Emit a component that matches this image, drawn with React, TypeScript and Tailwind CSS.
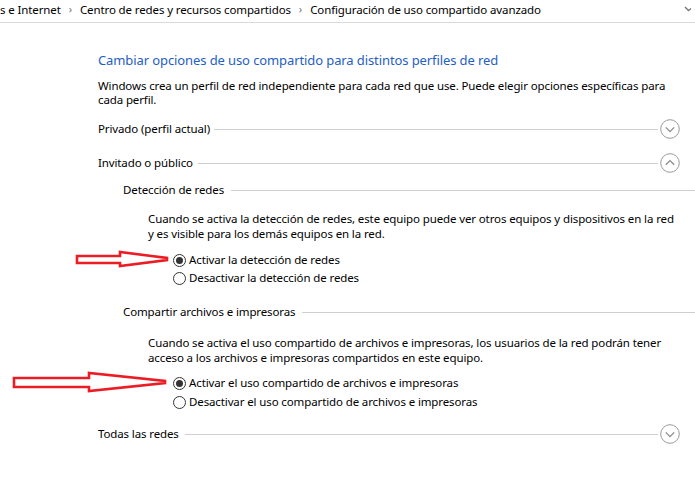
import React from "react";

const font = { fontFamily: '"Segoe UI", "Noto Sans", sans-serif' };

function CircleChevron({ up }: { up?: boolean }) {
  return (
    <svg width="20" height="20" viewBox="0 0 20 20" className="shrink-0 ml-[2px]">
      <circle cx="10" cy="10" r="9.3" fill="none" stroke="#9a9a9a" strokeWidth="1" />
      {up ? (
        <path d="M5.8 11.8 L10 7.6 L14.2 11.8" fill="none" stroke="#8a8a8a" strokeWidth="1.3" />
      ) : (
        <path d="M5.8 8.4 L10 12.6 L14.2 8.4" fill="none" stroke="#8a8a8a" strokeWidth="1.3" />
      )}
    </svg>
  );
}

function Radio({ checked, label }: { checked?: boolean; label: string }) {
  return (
    <div className="flex items-center h-[18px]">
      <span className="w-[13px] h-[13px] rounded-full border border-[#333] flex items-center justify-center bg-white shrink-0">
        {checked && <span className="w-[7px] h-[7px] rounded-full bg-[#333]" />}
      </span>
      <span className="ml-[3px]">{label}</span>
    </div>
  );
}

function Arrow({ points, className }: { points: string; className: string }) {
  return (
    <svg className={"absolute " + className} width="180" height="30" viewBox="0 0 180 30">
      <polygon points={points} fill="none" stroke="#ec1c24" strokeWidth="2.6" strokeLinejoin="miter" />
    </svg>
  );
}

export default function App() {
  return (
    <div
      className="relative w-[695px] h-[492px] bg-white overflow-hidden text-[11.5px] tracking-[-0.12px] text-black"
      style={font}
    >
      <div className="h-[23px] border-b border-[#d9d9d9] flex items-center pb-[3px] relative">
        <span>s e Internet</span>
        <span className="ml-[8px] mr-[8px] text-[#777] text-[11px]">›</span>
        <span>Centro de redes y recursos compartidos</span>
        <span className="ml-[8px] mr-[8px] text-[#777] text-[11px]">›</span>
        <span>Configuración de uso compartido avanzado</span>
        <svg className="absolute right-[3px] top-[6px]" width="8" height="6" viewBox="0 0 8 6">
          <path d="M1 1 L4.5 4.5 L7 2.5" fill="none" stroke="#777" strokeWidth="1.4" />
        </svg>
      </div>

      <div className="pl-[98px] pr-[15px]">
        <div className="mt-[27px] h-[20px] leading-[20px] text-[13px] tracking-[-0.1px] text-[#1f5ec4]">
          Cambiar opciones de uso compartido para distintos perfiles de red
        </div>
        <p className="mt-[9px] leading-[14px]">
          Windows crea un perfil de red independiente para cada red que use. Puede elegir opciones específicas para cada perfil.
        </p>

        <div className="mt-[12px] h-[20px] flex items-center">
          <span>Privado (perfil actual)</span>
          <span className="flex-1 h-px bg-[#cfcfcf] ml-[4px]" />
          <CircleChevron />
        </div>

        <div className="mt-[14px] h-[20px] flex items-center">
          <span>Invitado o público</span>
          <span className="flex-1 h-px bg-[#cfcfcf] ml-[5px]" />
          <CircleChevron up />
        </div>

        <div className="pl-[25px] mr-[-15px]">
          <div className="mt-[9px] h-[16px] flex items-center">
            <span>Detección de redes</span>
            <span className="flex-1 h-px bg-[#cfcfcf] ml-[7px]" />
          </div>
          <div className="pl-[25px] pr-[15px]">
            <p className="mt-[13px] leading-[15px]">
              Cuando se activa la detección de redes, este equipo puede ver otros equipos y dispositivos en la red y es visible para los demás equipos en la red.
            </p>
            <div className="mt-[10px] pl-[25px]">
              <Radio checked label="Activar la detección de redes" />
              <Radio label="Desactivar la detección de redes" />
            </div>
          </div>

          <div className="mt-[17px] h-[16px] flex items-center">
            <span>Compartir archivos e impresoras</span>
            <span className="flex-1 h-px bg-[#cfcfcf] ml-[7px]" />
          </div>
          <div className="pl-[25px] pr-[15px]">
            <p className="mt-[15px] leading-[15px]">
              Cuando se activa el uso compartido de archivos e impresoras, los usuarios de la red podrán tener acceso a los archivos e impresoras compartidos en este equipo.
            </p>
            <div className="mt-[9px] pl-[25px]">
              <Radio checked label="Activar el uso compartido de archivos e impresoras" />
              <div className="mt-[1px]">
                <Radio label="Desactivar el uso compartido de archivos e impresoras" />
              </div>
            </div>
          </div>
        </div>

        <div className="mt-[13px] h-[20px] flex items-center">
          <span>Todas las redes</span>
          <span className="flex-1 h-px bg-[#cfcfcf] ml-[6px]" />
          <CircleChevron />
        </div>
      </div>

      <Arrow className="left-[70px] top-[244px]" points="7,12 50,12 50,8 97,14 97,16 50,22 50,19 7,19" />
      <Arrow className="left-[10px] top-[367px]" points="4,11 79,11 79,6 155,14 155,16 79,24 79,20 4,20" />
    </div>
  );
}
